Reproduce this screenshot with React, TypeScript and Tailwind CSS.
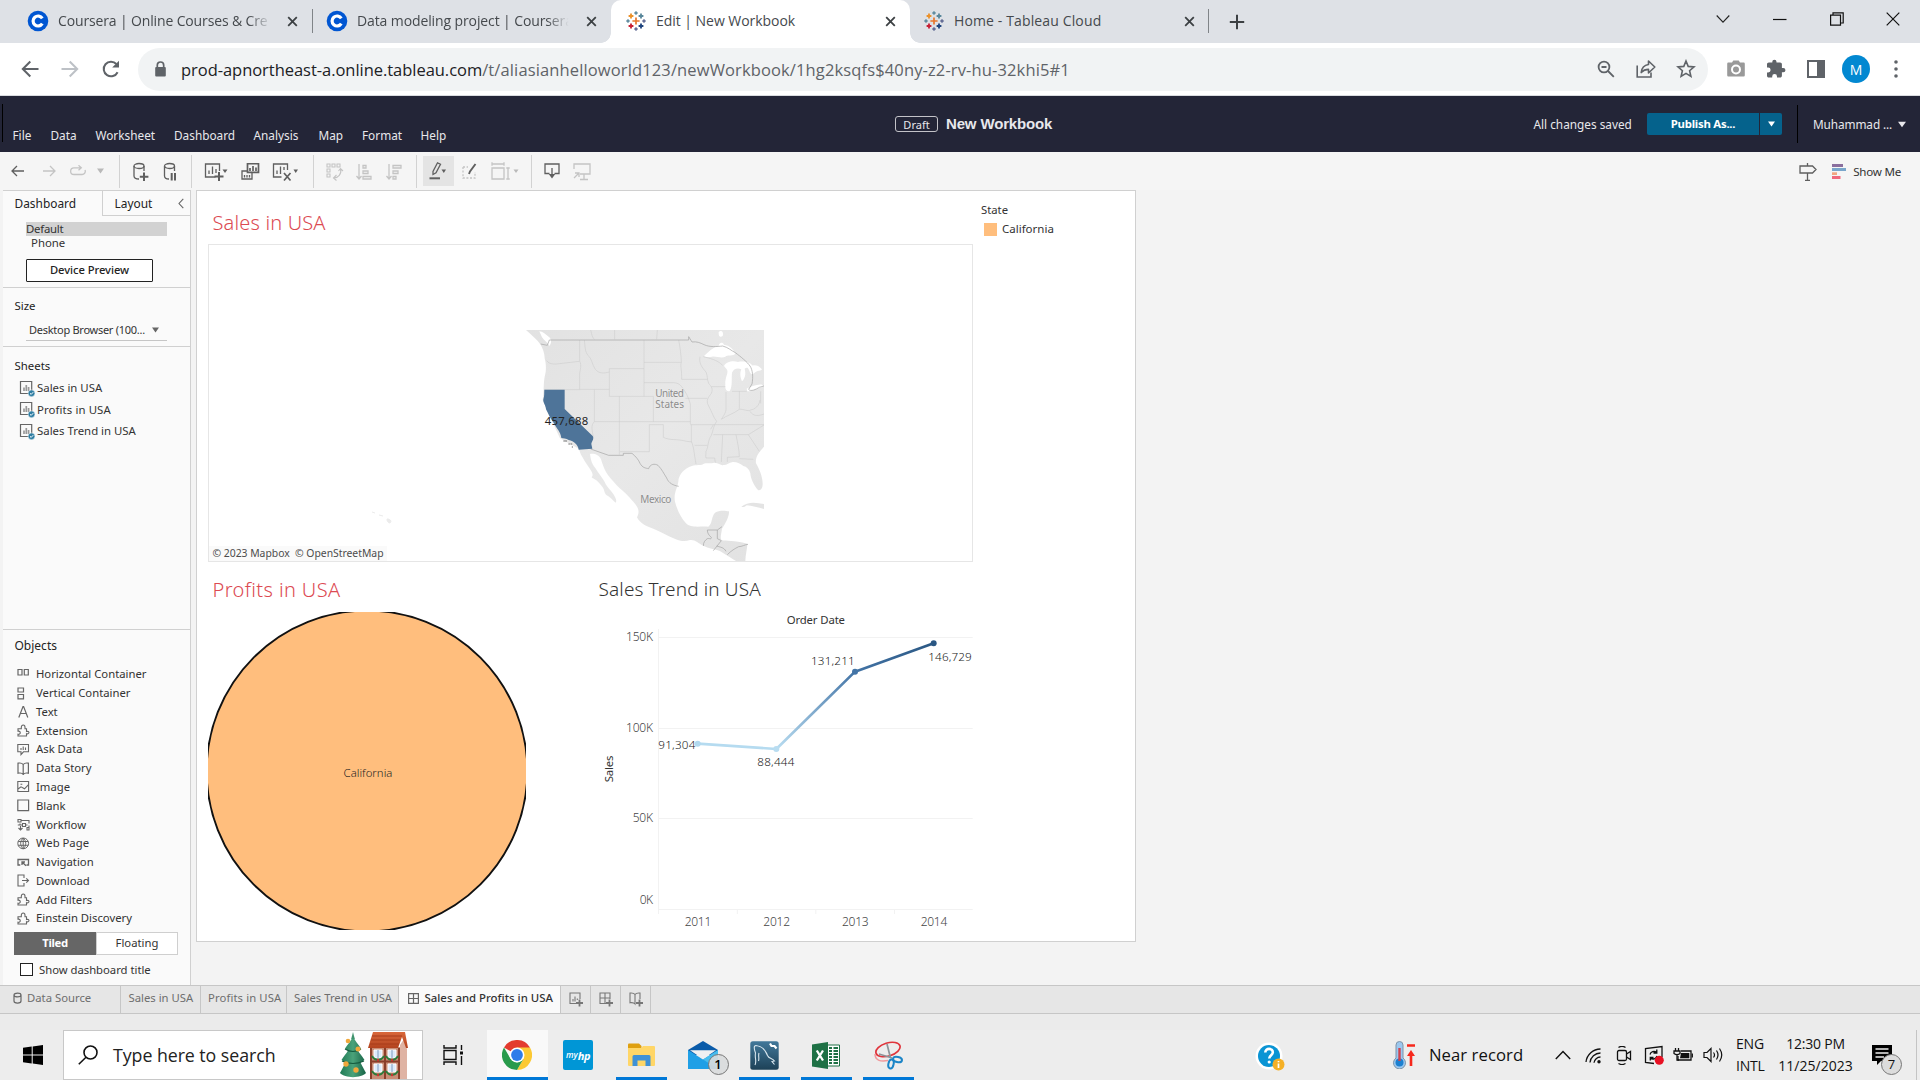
import type { ReactNode } from "react";

/* ---------- shared pieces ---------- */

function Icon({ w = 24, h = 24, sw = 1.3, color = "#666666", children }: { w?: number; h?: number; sw?: number; color?: string; children: ReactNode }) {
  return (
    <svg width={w} height={h} viewBox={`0 0 ${w} ${h}`} fill="none" stroke={color} strokeWidth={sw} className="block shrink-0">
      {children}
    </svg>
  );
}

function Cell({ className, children }: { className: string; children?: ReactNode }) {
  return <div className={`flex shrink-0 items-center justify-center ${className}`}>{children}</div>;
}

/* ---------- browser chrome ---------- */

function CourseraLogo() {
  return (
    <Icon w={22} h={22} sw={3.2} color="#fff">
      <circle cx="11" cy="11" r="10.3" fill="#0056d2" stroke="none" />
      <path d="M15.3 8.3 A5 5 0 1 0 15.3 13.7" />
    </Icon>
  );
}

function TableauLogo() {
  const plus = (x: number, y: number, r: number) => `M${x - r} ${y}H${x + r}M${x} ${y - r}V${y + r}`;
  return (
    <Icon w={20} h={20} sw={1.4} color="#e8762c">
      <path d={plus(10, 10, 3.6)} strokeWidth="1.7" />
      <path d={plus(5, 5, 2.4)} stroke="#eb9129" strokeWidth="1.8" />
      <path d={plus(15, 5, 2.4)} stroke="#59879b" strokeWidth="1.8" />
      <path d={plus(5, 15, 2.4)} stroke="#c72035" strokeWidth="1.8" />
      <path d={plus(15, 15, 2.4)} stroke="#1f447e" strokeWidth="1.8" />
      <path d={plus(10, 2, 1.7)} stroke="#59879b" />
      <path d={plus(10, 18, 1.7)} stroke="#5b6591" />
      <path d={plus(2, 10, 1.7)} stroke="#59879b" />
      <path d={plus(18, 10, 1.7)} stroke="#5b6591" />
    </Icon>
  );
}

function CloseX() {
  return (
    <Icon w={11} h={11} sw={1.8} color="#3c4043">
      <path d="M1.2 1.2 9.8 9.8M9.8 1.2 1.2 9.8" />
    </Icon>
  );
}

function TabStrip() {
  const text = "overflow-hidden whitespace-nowrap text-[14px] leading-5 text-[#45494d]";
  return (
    <div className="flex h-[43px] items-stretch bg-[#dee1e6]" style={{ fontFamily: '"Open Sans", sans-serif' }}>
      <div className="flex w-[313px] items-center pb-px pl-[27px]">
        <CourseraLogo />
        <span className={`${text} ml-[9px] w-[216px] tracking-[-0.14px] [mask-image:linear-gradient(to_right,black_88%,transparent_99%)]`}>Coursera | Online Courses &amp; Cre</span>
        <span className="ml-[13px]"><CloseX /></span>
        <span className="ml-auto h-6 w-px bg-[#808488]" />
      </div>
      <div className="flex w-[298px] items-center pb-px pl-[13px]">
        <CourseraLogo />
        <span className={`${text} ml-[9px] w-[216px] tracking-[-0.11px] [mask-image:linear-gradient(to_right,black_88%,transparent_98%)]`}>Data modeling project | Coursera</span>
        <span className="ml-[13px]"><CloseX /></span>
      </div>
      <div className="relative flex w-[299px] items-center rounded-t-[10px] bg-white pb-px pl-[15px] before:absolute before:-left-2.5 before:bottom-0 before:size-2.5 before:bg-[radial-gradient(circle_at_0_0,transparent_9.5px,white_10px)] after:absolute after:-right-2.5 after:bottom-0 after:size-2.5 after:bg-[radial-gradient(circle_at_100%_0,transparent_9.5px,white_10px)]">
        <TableauLogo />
        <span className={`${text} ml-[10px] w-[220px] tracking-[-0.04px]`}>Edit | New Workbook</span>
        <span className="ml-[9px]"><CloseX /></span>
      </div>
      <div className="flex w-[299px] items-center pb-px pl-[14px]">
        <TableauLogo />
        <span className={`${text} ml-[10px] w-[220px] tracking-[0.13px]`}>Home - Tableau Cloud</span>
        <span className="ml-[10px]"><CloseX /></span>
        <span className="ml-auto h-6 w-px bg-[#808488]" />
      </div>
      <Cell className="w-[55px]">
        <Icon w={16} h={16} sw={2} color="#3c4043"><path d="M8 .8V15.2M.8 8H15.2" /></Icon>
      </Cell>
      <div className="ml-auto flex pb-[6px]">
        <Cell className="w-[57px]"><Icon w={14} h={14} sw={1.1} color="#222"><path d="M.7 3.5 7 10.2 13.3 3.5" /></Icon></Cell>
        <Cell className="w-[57px]"><Icon w={14} h={14} sw={1.2} color="#111"><path d="M0 7.5H13.5" /></Icon></Cell>
        <Cell className="w-[57px]"><Icon w={14} h={14} sw={1.2} color="#111"><path d="M.6 3.1H10.5V13.2H.6ZM3 3V.8H13.2V11H10.6" /></Icon></Cell>
        <Cell className="w-[55px] pl-px"><Icon w={14} h={14} sw={1.2} color="#111"><path d="M.7 .7 13.3 13.3M13.3 .7 .7 13.3" /></Icon></Cell>
      </div>
    </div>
  );
}

function AddressBar() {
  return (
    <div className="flex h-[53px] items-center border-b border-[#dadce0] bg-white" style={{ fontFamily: '"Open Sans", sans-serif' }}>
      <Cell className="ml-[10px] w-10"><Icon w={18} h={18} sw={2} color="#5f6368"><path d="M17.5 9H2M9.3 1.5 1.8 9 9.3 16.5" /></Icon></Cell>
      <Cell className="w-10"><Icon w={18} h={18} sw={2} color="#bdc1c6"><path d="M.5 9H16M8.7 1.5 16.2 9 8.7 16.5" /></Icon></Cell>
      <Cell className="w-10 pl-px">
        <Icon w={20} h={20} sw={2} color="#5f6368"><path d="M16.6 13.2A7.3 7.3 0 1 1 15.4 5" /><path d="M18 1.8V8.6H11.2Z" fill="#5f6368" stroke="none" /></Icon>
      </Cell>
      <div className="ml-2 flex h-[43px] w-[1570px] items-center rounded-full bg-[#f1f3f4] pl-[16px]">
        <Icon w={13} h={17} sw={1.7} color="#5f6368"><path d="M3.3 7V4.2A3.2 3.2 0 0 1 9.7 4.2V7" /><rect x="1.2" y="6" width="10.6" height="9.500" rx="1" fill="#5f6368" stroke="none" /></Icon>
        <span className="ml-[14px] whitespace-nowrap pt-[2px] text-[16.5px] text-[#202124] tracking-[-0.04px]">
          prod-apnortheast-a.online.tableau.com<span className="tracking-[0.13px] text-[#5f6368]">/t/aliasianhelloworld123/newWorkbook/1hg2ksqfs$40ny-z2-rv-hu-32khi5#1</span>
        </span>
        <div className="ml-auto flex pr-[2px]">
          <Cell className="w-10"><Icon w={18} h={18} sw={1.8} color="#5f6368"><circle cx="7" cy="7" r="5.4" /><path d="M11 11 16.8 16.8M4.5 7H9.5" /></Icon></Cell>
          <Cell className="w-10"><Icon w={20} h={20} sw={1.6} color="#5f6368"><path d="M1.2 6.5V18H15V13.5" /><path d="M12.5 2V5.5C7.5 6.2 5.6 9.6 5.2 13.6C7.2 11.3 9.3 10.4 12.5 10.4V14L18.8 8Z" strokeLinejoin="round" /></Icon></Cell>
          <Cell className="w-10"><Icon w={20} h={20} sw={1.6} color="#5f6368"><path d="M10 2 12.2 7.4 18 7.9 13.6 11.7 14.9 17.4 10 14.4 5.1 17.4 6.4 11.7 2 7.9 7.8 7.4Z" /></Icon></Cell>
        </div>
      </div>
      <Cell className="ml-[8px] w-10">
        <Icon w={20} h={20}><path d="M6 3.5 7.3 1.6H12.7L14 3.5H17.5A1.2 1.2 0 0 1 18.8 4.7V16.3A1.2 1.2 0 0 1 17.5 17.5H2.5A1.2 1.2 0 0 1 1.2 16.3V4.7A1.2 1.2 0 0 1 2.5 3.5Z" fill="#999" stroke="none" /><circle cx="10" cy="10.5" r="4" fill="none" stroke="#fff" strokeWidth="2" /></Icon>
      </Cell>
      <Cell className="w-10">
        <Icon w={20} h={20}><path d="M17.3 9H15.9V5.3C15.9 4.3 15.1 3.5 14.1 3.5H10.5V2.8A2.1 2.1 0 0 0 6.3 2.8V3.5H2.8C1.8 3.5 1 4.3 1 5.3V8.6H2.2A2.4 2.4 0 0 1 2.2 13.4H1V16.8C1 17.8 1.8 18.6 2.8 18.6H6.2V17.4A2.4 2.4 0 0 1 11 17.4V18.6H14.1C15.1 18.6 15.9 17.8 15.9 16.8V13.3H17.3A2.15 2.15 0 0 0 17.3 9Z" fill="#5f6368" stroke="none" /></Icon>
      </Cell>
      <Cell className="w-10"><Icon w={18} h={18} sw={2} color="#5f6368"><path d="M1 1H17V17H1Z" /><path d="M11 1H17V17H11Z" fill="#5f6368" /></Icon></Cell>
      <Cell className="w-10"><span className="flex size-7 items-center justify-center rounded-full bg-[#0288d1] text-[14px] text-white">M</span></Cell>
      <Cell className="w-10"><Icon w={4} h={18}><path d="M2 2h0M2 9h0M2 16h0" stroke="#5f6368" strokeWidth="3.6" strokeLinecap="round" /></Icon></Cell>
    </div>
  );
}

/* ---------- Tableau header and toolbar ---------- */

function Caret({ color = "#8a8a8a", w = 7 }: { color?: string; w?: number }) {
  return <svg width={w} height={w - 1} viewBox="0 0 7 6" className="block shrink-0"><path d="M0 .5H7L3.5 5.5Z" fill={color} /></svg>;
}

function AppHeader() {
  return (
    <header className="flex h-14 bg-[#232537] text-[11.8px] leading-4 text-[#e8e8ec]">
      <span className="ml-[2px] mt-2 h-[38px] w-px bg-black" />
      <nav className="mt-[31px] flex w-[892px] whitespace-nowrap pl-[9.5px]">
        <span className="w-[38px]">File</span>
        <span className="w-[45px]">Data</span>
        <span className="w-[78.5px]">Worksheet</span>
        <span className="w-[79.5px]">Dashboard</span>
        <span className="w-[65px]">Analysis</span>
        <span className="w-[43.5px]">Map</span>
        <span className="w-[58.5px]">Format</span>
        <span>Help</span>
      </nav>
      <div className="flex h-14 w-[638.5px] items-center whitespace-nowrap">
        <span className="flex h-4 w-[43px] items-center justify-center rounded-[3px] border border-[#c3c3c8] text-[11px] leading-none">Draft</span>
        <span className="ml-2 text-[15px] font-bold tracking-[-0.15px]" style={{ fontFamily: '"Liberation Sans", sans-serif' }}>New Workbook</span>
      </div>
      <div className="flex h-14 items-center whitespace-nowrap">
        <span className="w-[113.5px]">All changes saved</span>
        <span className="flex h-[22px] w-[112px] items-center justify-center rounded-l-[2px] bg-[#05628c] text-[11.4px] font-bold tracking-[-0.25px] text-white">Publish As...</span>
        <span className="ml-px flex h-[22px] w-[22px] items-center justify-center rounded-r-[2px] bg-[#05628c]"><Caret color="#fff" /></span>
        <span className="ml-[15px] h-[38px] w-px bg-black" />
        <span className="ml-[15px] w-[85px] tracking-[-0.1px]">Muhammad ...</span>
        <Caret color="#e8e8ec" w={8} />
      </div>
    </header>
  );
}

const G = "#5f5f5f";
const L = "#c4c4c4";

function Divider({ className }: { className: string }) {
  return <span className={`h-[33px] w-px shrink-0 self-center bg-[#d2d2d2] ${className}`} />;
}

function Toolbar() {
  return (
    <div className="flex h-[38px] items-stretch bg-[#f5f5f5]">
      <Cell className="ml-[2px] w-[31px]"><Icon w={14} h={12} color={G}><path d="M13 6H1.2M6 1 1 6 6 11" /></Icon></Cell>
      <Cell className="w-[31px]"><Icon w={14} h={12} color={L}><path d="M1 6H12.8M8 1 13 6 8 11" /></Icon></Cell>
      <Cell className="w-[28px]"><Icon w={18} h={12} color={L}><path d="M12 2.800H5A3 3 0 0 0 5 9.500H13A3.200 3.200 0 0 0 16 5M9.500 .3 12.300 2.800 9.500 5.300" /></Icon></Cell>
      <Cell className="w-[17px]"><Caret color="#b9b9b9" /></Cell>
      <Divider className="ml-[10px]" />
      <Cell className="ml-[5px] w-[30px] pt-[2px] pl-px"><Icon w={16} h={20} color={G}><ellipse cx="6" cy="4" rx="5" ry="2.5" /><path d="M1 4V14C1 16 3 17 6 17M11 4V9" /><path d="M11 10.5V19M6.8 14.7H15.4" strokeWidth="2" /></Icon></Cell>
      <Cell className="w-[29px] pt-[2px]"><Icon w={14} h={20} color={G}><ellipse cx="6.5" cy="4" rx="5" ry="2.5" /><path d="M1.5 4V14C1.5 16 3 17 6 17M11.5 4V9" /><path d="M8.7 11V18.5M12 11V18.5" strokeWidth="2" /></Icon></Cell>
      <Divider className="ml-[7px]" />
      <Cell className="ml-[7px] w-[34px] pt-[2px]">
        <Icon w={24} h={20} color={G}><path d="M11.5 15H1.5V2H15.5V9M5 12V8.5M8.5 12V4.5M12 11V7" /><path d="M15 10V19M10.5 14.5H19.5" strokeWidth="2" /><path d="M18.500 7.5H23.500L21 11Z" fill={G} stroke="none" /></Icon>
      </Cell>
      <Cell className="ml-[2px] w-[31px] pt-px">
        <Icon w={20} h={18} color={G}><path d="M6.5 .7H17.5V9.3H6.5ZM9 8V5M12 8V3M15 8V4.5" strokeWidth="1.7" /><path d="M11 10V16H1V8H6M3.5 14.5V12M6 14.5V12M8.5 14.5V12" /></Icon>
      </Cell>
      <Cell className="ml-[1px] w-[36px] pt-[2px]">
        <Icon w={26} h={20} color={G}><path d="M9.5 15H1.5V2H15.5V8M5 12V8.5M8.5 12V4.5M12 8V5" /><path d="M12 11 18.5 18.5M18.5 11 12 18.5" strokeWidth="1.7" /><path d="M21.500 7.5H26L23.700 11Z" fill={G} stroke="none" /></Icon>
      </Cell>
      <Divider className="ml-[10px]" />
      <Cell className="ml-[6px] w-[29px] pt-px">
        <Icon w={18} h={18} color={L}><path d="M1 1H4V4H1ZM6 1H9V4H6ZM11 1H14V4H11ZM1 6H4V9H1ZM1 11H4V14H1ZM14.5 6C16 11 12 15 8 15M10.5 12 7.5 15 10.5 17.5M12.5 8 14.5 5.5 17 8" strokeWidth="1.1" /></Icon>
      </Cell>
      <Cell className="w-[29px] pt-px"><Icon w={16} h={18} color={L}><path d="M3 1V16M.5 13 3 16 5.5 13M7 2.5H10V5H7ZM7 8H12V10.5H7ZM7 13.5H15V16H7Z" /></Icon></Cell>
      <Cell className="ml-[1px] w-[29px] pt-px"><Icon w={16} h={18} color={L}><path d="M3 1V16M.5 13 3 16 5.5 13M7 2.5H15V5H7ZM7 8H12V10.5H7ZM7 13.5H10V16H7Z" /></Icon></Cell>
      <Divider className="ml-[8px]" />
      <Cell className="ml-[6px] my-[4px] w-[31px] bg-[#e4e4e4] pr-[3px]">
        <Icon w={20} h={20} color={G}><path d="M6 13.5V10.5L10.500 1.8 13.5 3.2 9 11.8Z" /><path d="M2.500 17.3H13" strokeWidth="2" /><path d="M14.500 8.5H19L16.8 12Z" fill={G} stroke="none" /></Icon>
      </Cell>
      <Cell className="ml-[1px] w-[30px]">
        <Icon w={18} h={18} color={L}><path d="M2 5V16H14V10M2 5H7" strokeDasharray="2 1.6" /><path d="M14.5 2 9 9.5 8 12" stroke={G} strokeWidth="1.9" /></Icon>
      </Cell>
      <Cell className="ml-[2px] w-[36px]">
        <Icon w={28} h={18} color={L}><path d="M1 2H13M1 .3V3.7M13 .3V3.7M1 6H13V17H1ZM17 6V17M15.3 6H18.7M15.3 17H18.7" /><path d="M22.5 7.5H27.5L25 11Z" fill="#b9b9b9" stroke="none" /></Icon>
      </Cell>
      <Divider className="ml-[8px]" />
      <Cell className="ml-[5px] w-[30px]"><Icon w={16} h={18} color={G}><path d="M5.5 11.500H1V2H15V11.500H10.5M8 6V14" /><path d="M4.7 12H11.3L8 16.5Z" fill={G} stroke="none" /></Icon></Cell>
      <Cell className="w-[30px] pt-px"><Icon w={20} h={18} color={L}><path d="M2 6V1H18V11H8M12 11V16.5M8 16.5H16M2 15 7 10M3 10H7V14" /></Icon></Cell>
      <div className="ml-auto flex items-center pr-[19px] pt-px">
        <Icon w={18} h={18} color={G}><path d="M8.5 0V3M8.5 10V17.5M6 17.3H11M1 3H13.5L17 6.5 13.5 10H1Z" /></Icon>
        <svg width="14" height="17" viewBox="0 0 14 17" className="ml-[15px]"><path d="M0 1H11V4H0Z" fill="#8a6f9e" /><path d="M0 5H14V8H0Z" fill="#79a6cb" /><path d="M0 9.3H5V12H0Z" fill="#f2a680" /><path d="M0 13H8.5V16H0Z" fill="#f0697c" /></svg>
        <span className="ml-[7px] whitespace-nowrap text-[11.6px] tracking-[-0.25px] text-[#333]">Show Me</span>
      </div>
    </div>
  );
}

/* ---------- sidebar ---------- */

function SheetItem({ label, tight }: { label: string; tight?: string }) {
  return (
    <div className="flex h-[21.6px] items-center pl-[16px]">
      <Icon w={17} h={17}>
        <path d="M1.5 1.5H12.7V13.5H1.5Z" strokeWidth="1.2" />
        <path d="M5 11V7.5M7.3 11V5M9.6 11V7" stroke="#999" strokeWidth="1.7" />
        <circle cx="12.500" cy="13.3" r="3.4" fill="#2f7ea3" stroke="#fafafa" strokeWidth=".5" />
        <path d="M11 13.3 12.2 14.4 14.2 12.2" stroke="#fff" strokeWidth="1" />
      </Icon>
      <span className={`ml-[1px] whitespace-nowrap text-[11.4px] leading-4 ${tight ?? ""}`}>{label}</span>
    </div>
  );
}

const puzzle = <path d="M1 4.800H4.300V3.300C4.300 .2 8 .2 8 3.300V4.800H9.500V7.500C12.800 6.600 12.800 10.600 9.500 9.700V12H1V10.200C4 10.700 4 6.600 1 7.200Z" strokeWidth="1.1" />;

const objects: [string, ReactNode][] = [
  ["Horizontal Container", <path d="M1 1.5H5V7H1ZM7.3 1.5H11.3V7H7.3Z" />],
  ["Vertical Container", <path d="M1 1H6.5V5H1ZM1 7.5H6.5V11.8H1Z" />],
  ["Text", <path d="M1.8 12.5 6 1.5H6.6L10.8 12.5M3.3 8.5H9.3" />],
  ["Extension", puzzle],
  ["Ask Data", <path d="M.8 1.5H11.5V8.8H6.5L4 11.5V8.8H.8ZM4 7V5M6.2 7V3.5M8.5 7V4.5" strokeWidth="1.1" />],
  ["Data Story", <path d="M6.2 2.5V12.3C5 10.8 3 10.8 1 11.2V1.2C3 .8 5 1 6.2 2.5C7.4 1 9.4 .8 11.4 1.2V11.2C9.4 10.8 7.4 10.8 6.2 12.3" />],
  ["Image", <path d="M.8 1.5H11.6V11.5H.8ZM1 9 4 6.8 7.5 8.8 11.3 4.8M3.5 4.3H5.3" strokeWidth="1.1" />],
  ["Blank", <path d="M.8 1H11.6V11.6H.8Z" />],
  ["Workflow", <path d="M1 1.500H4V4H1ZM4 2.500H12V5.500M.8 7H3V5.500M5.500 5.500H8.500V8.500H5.500ZM3 7H5.500M8.500 7H10.500M3.500 8V11.800M1.500 10 3.500 12 5.500 10M12 7.500V9.500M10 9.500H12V12H10Z" strokeWidth="1.1" />],
  ["Web Page", <path d="M6.2 1A5.4 5.4 0 1 0 6.2 11.8 5.4 5.4 0 1 0 6.2 1ZM6.2 1C2.8 4 2.8 8.8 6.2 11.8C9.6 8.8 9.6 4 6.2 1ZM1.2 4.5H11.2M1.2 8.3H11.2M6.2 1V12" strokeWidth="1" />],
  ["Navigation", <path d="M3.3 9H1V3.5H11.5V9H9.5M9 9.8 5 6M5 9V6H8" strokeWidth="1.3" />],
  ["Download", <path d="M7 4V1H1V12H7V9M5 6.5H11.5M9.3 4.3 11.5 6.5 9.3 8.7" strokeWidth="1.1" />],
  ["Add Filters", puzzle],
  ["Einstein Discovery", puzzle],
];

function Sidebar() {
  return (
    <aside className="ml-[3px] flex w-[188px] shrink-0 flex-col border-r border-t border-[#d0d0d0] bg-[#fafafa] text-[#333]">
      <div className="flex h-[25px] text-[11.9px] leading-4">
        <span className="w-[99px] pl-[11.5px] pt-[4px] text-[#222]">Dashboard</span>
        <div className="flex grow border-b border-l border-[#d0d0d0] pl-[11.5px] pt-[4px]">
          <span className="w-[63px] text-[#222]">Layout</span>
          <span className="pt-[3px]"><Icon w={6} h={11} sw={1.1}><path d="M5.3 .8 1 5.5 5.3 10.2" /></Icon></span>
        </div>
      </div>
      <div className="h-[72px] border-b border-[#d0d0d0] pl-[23px] pt-[6px] text-[11.4px] leading-[14px]">
        <div className="h-[14px] w-[141px] bg-[#d2d2d2] tracking-[-0.25px]">Default</div>
        <div className="pl-[5px]">Phone</div>
        <div className="mt-[9px] flex h-[23px] w-[127px] items-center justify-center rounded-[1px] border border-[#222] bg-white pb-px text-[11.2px] font-medium tracking-[-0.05px] text-[#222]">Device Preview</div>
      </div>
      <div className="h-[59px] border-b border-[#d0d0d0] pl-[11.5px] pt-[10px]">
        <div className="text-[11.4px] leading-4 text-[#222]">Size</div>
        <div className="ml-[11.500px] mt-[6px] flex h-[21px] w-[141px] items-center border-b border-[#c6c6c6] pl-[3px]">
          <span className="w-[123px] whitespace-nowrap text-[11px] tracking-[-0.27px]">Desktop Browser (100...</span>
          <Caret color="#666" />
        </div>
      </div>
      <div className="h-[283px] border-b border-[#d0d0d0] pt-[11px]">
        <div className="mb-[3.5px] pl-[11.5px] text-[11.4px] leading-4 text-[#222]">Sheets</div>
        <SheetItem label="Sales in USA" />
        <SheetItem label="Profits in USA" tight="tracking-[0.1px]" />
        <SheetItem label="Sales Trend in USA" />
      </div>
      <div className="flex h-[35px] pl-[11.5px] pt-[8px] text-[12px] leading-4 text-[#222]">Objects</div>
      {objects.map(([label, icon]) => (
        <div key={label} className="flex h-[18.78px] items-center pl-[14px]">
          <Icon w={13} h={13} sw={1.2}>{icon}</Icon>
          <span className="ml-[6px] whitespace-nowrap text-[11.3px] leading-4">{label}</span>
        </div>
      ))}
      <div className="ml-[11px] mt-[4px] flex h-[23px] w-[164px] text-[11.3px] leading-[22px]">
        <span className="w-[82px] bg-[#666] text-center font-bold tracking-[-0.3px] text-white">Tiled</span>
        <span className="w-[82px] border border-[#cfcfcf] bg-white text-center leading-5">Floating</span>
      </div>
      <div className="mt-[7px] flex items-center pl-[17px]">
        <span className="size-[13px] border border-[#222] bg-white" />
        <span className="ml-[6px] text-[11.3px] leading-4 tracking-[-0.02px]">Show dashboard title</span>
      </div>
    </aside>
  );
}

/* ---------- dashboard canvas ---------- */

const FONT = '"Noto Sans", sans-serif';

/** Mercator base map of North America with California filled. */
function UsaMap() {
  return (
    <svg width="290" height="260" viewBox="0 0 870 780" className="absolute left-[291px] top-[65px]" fontFamily={FONT}>
      <defs>
        <linearGradient id="land" x1="0" y1="0" x2="1" y2="1">
          <stop offset="0" stopColor="#e2e2e2" /><stop offset=".5" stopColor="#e8e8e8" /><stop offset="1" stopColor="#e2e2e2" />
        </linearGradient>
      </defs>
      <path fill="url(#land)" d="M78 60H792V410C778 425 765 440 768 460C778 478 788 500 788 522C788 535 782 543 774 540C764 530 752 508 751 490C748 478 740 470 730 468C722 462 710 455 698 456C686 458 680 466 670 465C664 470 655 456 640 459C625 462 618 456 606 464C590 466 580 464 566 472C548 482 536 496 535 515C532 535 520 550 525 575C530 595 540 620 558 640C572 655 600 648 625 650C638 640 634 618 645 608C658 600 676 602 687 604C688 620 676 640 666 656C664 672 660 682 664 690C680 694 700 690 742 701C742 715 736 735 736 753H708C695 745 680 735 668 728C650 716 625 718 608 706C596 700 585 688 570 690C552 696 540 692 524 686C500 676 480 664 460 656C440 650 420 640 411 622C418 608 416 600 412 592C406 580 396 572 388 562C376 548 362 538 350 526C338 510 325 500 318 486C312 476 308 464 303 448C298 436 285 430 270 432C272 446 274 460 286 474C296 490 304 500 312 512C318 528 332 540 340 552C345 562 352 570 347 578C338 570 330 560 318 554C312 548 314 540 308 532C300 522 292 512 284 508C282 504 272 504 276 500C282 492 272 482 268 474C258 460 250 446 243 434C240 426 238 420 236 416L180 385L150 320L128 270C132 250 130 220 134 200C140 180 138 160 134 145C134 130 128 115 122 104C112 90 95 75 78 60Z" />
      <path fill="#e4e4e4" d="M724 590C738 578 760 576 776 580L792 582V597C775 592 755 588 740 586C735 592 728 592 724 590Z" />
      <path fill="#fff" d="M118 64C128 64 138 74 148 82C156 90 154 102 148 108C144 98 132 92 126 82ZM612 138C625 126 638 112 656 108C656 98 668 94 672 104C688 106 700 118 706 130C700 142 684 132 676 140C664 146 650 138 636 140C626 142 616 142 612 138ZM672 168C676 156 700 150 714 156C732 152 752 158 758 168C752 176 742 170 734 176C738 192 736 204 726 214C722 205 718 190 724 178C714 172 700 176 696 188C694 206 698 226 690 242C680 248 674 236 676 222C674 204 688 186 680 178ZM656 66C664 58 672 66 668 78C662 82 655 82 656 66ZM740 236C750 232 770 222 786 224L792 230C776 232 760 244 742 244Z" />
      <path fill="#fff" d="M742 170C756 166 772 160 786 178C784 184 772 180 762 190C756 196 750 190 748 182Z" />
      <g fill="none" stroke="#c9c9c9" strokeWidth="1.500">
        <path d="M140 152C150 166 170 162 186 160C204 158 222 156 238 154M239 90V154C246 166 240 180 239 190V238H328M133 239H239M253 90C256 110 254 124 264 136C276 146 276 164 286 178C298 192 312 190 328 186V176H432M328 186V259H460M432 90V259M432 157H544M432 218H520C530 218 540 222 545 230C556 244 566 262 571 282V342M536 90C540 110 544 140 544 157C540 170 546 180 545 208M545 208H622M283 239V335M283 335H571M358 259V434M460 259V335M283 335C272 346 276 360 280 380M448 344H490V382C510 392 530 386 560 394L576 396M448 344V425H360M571 344H640L632 358M574 344V394C582 412 582 430 588 462M556 265H622M584 406H622M600 140C596 160 606 172 618 186C624 200 620 206 626 220C634 230 640 236 634 250C626 262 616 270 626 288C636 306 640 322 650 334C640 346 640 362 634 376C622 394 626 410 618 424C618 434 616 440 618 444H644L646 458M610 140C630 146 650 148 668 166M634 230H676M678 246V300C674 316 668 320 664 328M718 244V296M664 328C680 316 700 312 718 298C730 296 744 306 752 300C764 298 778 288 780 270M640 344H792M640 374H745L792 345M668 374L664 456M708 374C712 396 718 420 718 440L682 442V456M718 446L760 448M745 374C756 390 766 406 778 424M696 244H740M782 244V280M750 304C760 320 776 318 792 312M272 60C276 74 276 84 284 88M344 60V88M472 60L470 88" />
      </g>
      <g fill="none" stroke="#a3a3a3" strokeWidth="2">
        <path d="M122 102L142 106L148 90H566V80L576 96C590 94 600 98 612 104C630 112 650 110 668 108C684 112 694 122 706 128C722 140 742 156 750 168C758 180 760 200 756 222L746 238C752 246 768 238 778 232L792 228" />
        <path d="M272 417L326 436H370V430H396C408 440 416 450 420 460C428 474 436 474 446 476C450 462 464 460 474 466C486 478 492 492 500 504C506 520 520 526 536 529" />
        <path d="M610 708C610 696 616 690 622 686C628 684 634 690 634 682C626 676 622 668 622 660H652L666 650M652 660V686L664 692L640 722M650 708C662 712 672 712 678 724M682 734C694 722 704 716 716 710C726 710 734 704 744 703" />
      </g>
      <path d="M133 239H194V297L278 378C284 386 274 396 274 402L277 416L236 419C234 404 222 394 206 390C198 384 190 386 184 384C182 366 170 356 162 340C150 325 146 312 138 298C138 288 128 276 130 268C134 256 132 248 133 239Z" fill="#4e7499" />
      <path d="M190 393H201M205 402H212M215 400V404M217 409V413" stroke="#777" strokeWidth="3" />
      <g fontSize="30" fill="#8c8c8c" stroke="#ececec" strokeWidth="3" paintOrder="stroke">
        <text x="466" y="261" textLength="86">United</text>
        <text x="466" y="295" textLength="86">States</text>
        <text x="421" y="580" textLength="93">Mexico</text>
      </g>
      <text x="134" y="345" fontSize="34" textLength="131" fill="#222">457,688</text>
    </svg>
  );
}

const years: [string, number][] = [["2011", 413], ["2012", 649], ["2013", 885], ["2014", 1121]];

function TrendChart() {
  return (
    <svg width="440" height="330" viewBox="0 120 1320 990" className="block" fontFamily={FONT}>
      <defs>
        <linearGradient id="g1" gradientUnits="userSpaceOnUse" x1="649" y1="537" x2="885" y2="305"><stop offset="0" stopColor="#b9ddf1" /><stop offset="1" stopColor="#4374a6" /></linearGradient>
        <linearGradient id="g2" gradientUnits="userSpaceOnUse" x1="885" y1="305" x2="1121" y2="220"><stop offset="0" stopColor="#4374a6" /><stop offset="1" stopColor="#2a5783" /></linearGradient>
      </defs>
      <g stroke="#f2f2f2" strokeWidth="3">
        <path d="M295.5 177V1032M295 202.5H1238M295 475.5H1238M295 745.5H1238M295 1018.5H1238M532 1018V1032M767.5 1018V1032M1003.5 1018V1032" />
      </g>
      <g fontSize="36" fill="#444" fontWeight="300">
        <text x="198" y="213" textLength="81">150K</text>
        <text x="198" y="486" textLength="81">100K</text>
        <text x="218" y="756" textLength="61">50K</text>
        <text x="239" y="1002" textLength="40">0K</text>
        {years.map(([y, x]) => <text key={y} x={x - 39} y="1069" textLength="80">{y}</text>)}
      </g>
      <text x="680" y="162" fontSize="34" textLength="175" fill="#333">Order Date</text>
      <text transform="translate(159 637) rotate(-90)" fontSize="34" textLength="80" fill="#333">Sales</text>
      <g fill="none" strokeWidth="8" strokeLinecap="round">
        <path d="M413 521 649 537" stroke="#b5dbf0" />
        <path d="M649 537 885 305" stroke="url(#g1)" />
        <path d="M885 305 1121 220" stroke="url(#g2)" />
      </g>
      <circle cx="413" cy="521" r="9" fill="#b1d8ee" /><circle cx="649" cy="537" r="9" fill="#b9ddf1" />
      <circle cx="885" cy="305" r="9" fill="#4374a6" /><circle cx="1121" cy="220" r="9" fill="#2a5783" />
      <g fontSize="35" fill="#222" fontWeight="300">
        <text x="295" y="536" textLength="111">91,304</text>
        <text x="592" y="588" textLength="111">88,444</text>
        <text x="753" y="285" textLength="131">131,211</text>
        <text x="1105" y="273" textLength="130">146,729</text>
      </g>
    </svg>
  );
}

function Dashboard() {
  return (
    <main className="ml-[5px] h-[752px] w-[940px] shrink-0 border border-[#d0d0d0] bg-white">
      <div className="flex pl-[11px]">
        <section className="w-[765px]">
          <h2 className="flex h-[53px] items-center pl-[4.5px] pt-[10px] text-[20px] font-light leading-7 tracking-[0.16px] text-[#dc4a52]">Sales in USA</h2>
          <div className="relative h-[318px] border border-[#e6e6e6]">
            <UsaMap />
            <svg width="24" height="14" viewBox="0 0 24 14" className="absolute left-[160px] top-[266px]"><path d="M3 1 6 2M10 4 14 5M18 8C21 8 23 10 21 12 19 12 18 10 18 8Z" stroke="#ebebeb" fill="#ebebeb" /></svg>
            <span className="absolute bottom-0 left-0 whitespace-pre bg-[#fafafa] px-[3.5px] text-[10.4px] leading-[15px] tracking-[-0.02px] text-[#4c4c4c]">© 2023 Mapbox  © OpenStreetMap</span>
          </div>
        </section>
        <section className="ml-[8px] pt-[11px] text-[#333]">
          <div className="text-[11.3px] leading-4">State</div>
          <div className="mt-[3px] flex items-center">
            <span className="ml-[3px] size-[13px] bg-[#ffbe7d]" />
            <span className="ml-[5px] text-[11.5px] leading-4">California</span>
          </div>
        </section>
      </div>
      <div className="flex pl-[11px]">
        <section className="w-[352px]">
          <h2 className="flex h-[50px] items-center pl-[4.5px] pt-[6px] text-[20px] font-light leading-7 tracking-[0.39px] text-[#dc4a52]">Profits in USA</h2>
          <div className="relative flex size-[318px] items-center justify-center">
            <svg width="318" height="318" viewBox="0 0 318 318" className="absolute inset-0 overflow-hidden"><circle cx="159" cy="159" r="160.4" fill="#ffbe7d" stroke="#111" strokeWidth="1.9" /></svg>
            <span className="relative pl-[2px] pt-[4px] text-[11.3px] font-light tracking-[0.05px] text-[#222]">California</span>
          </div>
        </section>
        <section>
          <h2 className="flex h-[48px] items-center pl-[38.500px] pt-[6px] text-[19px] font-light leading-7 tracking-[0.13px] text-[#333]">Sales Trend in USA</h2>
          <TrendChart />
        </section>
      </div>
    </main>
  );
}

/* ---------- sheet tabs ---------- */

function SheetTabs() {
  const tab = "flex shrink-0 items-center border-r border-[#c6c6c6] whitespace-nowrap pb-[3px]";
  return (
    <div className="flex h-[29px] border-y border-[#c6c6c6] bg-[#e6e6e6] text-[11.3px] leading-4 text-[#6e6e6e]">
      <div className={`${tab} w-[121px] pl-[13px]`}>
        <Icon w={9} h={12} sw={1.2}><path d="M1 3C1 .5 8 .5 8 3V9C8 11.7 1 11.7 1 9ZM1 3C1 5.5 8 5.5 8 3" /></Icon>
        <span className="ml-[5px]">Data Source</span>
      </div>
      <div className={`${tab} w-[80px] pl-[7.5px]`}>Sales in USA</div>
      <div className={`${tab} w-[86px] pl-[7px] tracking-[0.1px]`}>Profits in USA</div>
      <div className={`${tab} w-[112px] pl-[7px]`}>Sales Trend in USA</div>
      <div className={`${tab} w-[162px] bg-[#fafafa] pl-[9px] text-[#333]`}>
        <Icon w={11} h={11} sw={1.2}><path d="M.6 .6H10.4V10.4H.6ZM5.5 .6V10.4M.6 5.5H10.4" /></Icon>
        <span className="ml-[5.5px] text-[11.4px] font-medium">Sales and Profits in USA</span>
      </div>
      <div className={`${tab} w-[30px] justify-center pl-px pt-0.5`}><Icon w={15} h={15} sw={1.1} color="#777"><path d="M7 11.5H1V1H11V7M4 9.5V7M6 9.5V4.5M8.3 8V6.5" /><path d="M10.5 7.5V14.5M7 11H14" strokeWidth="1.8" /></Icon></div>
      <div className={`${tab} w-[30px] justify-center pl-px pt-0.5`}><Icon w={15} h={15} sw={1.1} color="#777"><path d="M7 11.5H1V1H11V7M6 1V11.5M1 6H11" /><path d="M10.5 7.5V14.5M7 11H14" strokeWidth="1.8" /></Icon></div>
      <div className={`${tab} w-[30px] justify-center pl-px pt-0.5`}><Icon w={15} h={15} sw={1.1} color="#777"><path d="M6 2.5V12C5 10.8 3 10.5 1 10.8V1C3 .8 5 1 6 2.5C7 1 9 .8 11 1V7" /><path d="M10.5 7.5V14.5M7 11H14" strokeWidth="1.8" /></Icon></div>
    </div>
  );
}

/* ---------- Windows taskbar ---------- */

function XmasArt() {
  return (
    <svg width="72" height="48" viewBox="0 0 72 48" className="block">
      <defs>
        <linearGradient id="tree" x1="0" x2="1"><stop offset="0" stopColor="#1f7a55" /><stop offset=".5" stopColor="#4aa27a" /><stop offset="1" stopColor="#176346" /></linearGradient>
        <linearGradient id="roof" y1="0" y2="1" x2="0"><stop offset="0" stopColor="#d9673a" /><stop offset="1" stopColor="#b3431f" /></linearGradient>
      </defs>
      <path d="M14 5C16 10 19 13 22 17.500L19 19.500C21 23 23 25 25.500 29L21.500 31.500C23 35 25 38 27 42C22 47.500 6 47.500 1 42C3 38 5 35 6.500 31.500L2.500 29C5 25 7 23 9 19.500L6 17.500C9 13 12 10 14 5Z" fill="url(#tree)" />
      <path d="M6 18Q14 23 22 18M3 30Q14 35 25 30" stroke="#145a3e" strokeWidth="1.200" fill="none" />
      <path d="M14 1 15.800 8 12.200 8Z" fill="#3f936d" />
      <circle cx="9" cy="10" r="2.300" fill="#f0a83c" /><circle cx="19" cy="18" r="2.500" fill="#f0a83c" /><circle cx="7" cy="33" r="2.700" fill="#f0a83c" /><circle cx="17" cy="39" r="2.700" fill="#f0a83c" />
      <path d="M32 16H61V48H32Z" fill="#c98d76" />
      <path d="M61 14 65 8 68 18V48H61Z" fill="#dfb3a3" />
      <path d="M34 1H66L69 17H67L63 6 59 17H29Z" fill="url(#roof)" />
      <path d="M33 5H63M32 9H61M31 13H60" stroke="#a83c1b" strokeWidth="1" />
      <path d="M32 17V48M46 17V48M60 17V48M32 30.5H60" stroke="#8a3f2a" strokeWidth="2" />
      <path d="M35 19H43V27H35ZM49 19H57V27H49ZM35 33H43V41H35ZM49 33H57V41H49Z" fill="#dcebfa" stroke="#fff" />
      <path d="M39 19V27M53 19V27M39 33V41M53 33V41" stroke="#7f9cc0" strokeWidth="1" />
      <path d="M33 25C36 30 42 30 45 25M47 25C50 30 56 30 59 25M33 40C36 45 42 45 45 40M47 40C50 45 56 45 59 40" stroke="#2b7d3c" strokeWidth="2" fill="none" />
      <circle cx="39" cy="29" r="1.2" fill="#c33" /><circle cx="53" cy="29" r="1.2" fill="#c33" /><circle cx="39" cy="44" r="1.2" fill="#c33" /><circle cx="53" cy="44" r="1.2" fill="#c33" />
    </svg>
  );
}

function TaskApp({ className, running, children }: { className: string; running?: boolean; children: ReactNode }) {
  return (
    <div className={`flex h-[50px] shrink-0 flex-col items-center ${className}`}>
      <div className="flex h-[47px] items-center pr-px pt-[3px]">{children}</div>
      {running && <div className="h-[3px] w-full bg-[#0078d7]" />}
    </div>
  );
}

function Taskbar() {
  const K = "#111";
  return (
    <div className="flex h-[50px] items-stretch bg-[#ededed] text-[#111]" style={{ fontFamily: '"Open Sans", sans-serif' }}>
      <Cell className="w-[63px] pl-[2px]">
        <svg width="20" height="20" viewBox="0 0 20 20"><path d="M0 2.8 8.7 1.6V9.5H0ZM9.7 1.4 20 0V9.5H9.7ZM0 10.5H8.7V18.4L0 17.2ZM9.7 10.5H20V20L9.7 18.6Z" fill="#000" /></svg>
      </Cell>
      <div className="flex w-[360px] items-center border border-[#c8c8c8] bg-white">
        <span className="ml-[14px]"><Icon w={20} h={20} sw={1.6} color={K}><circle cx="12.5" cy="7.5" r="6.5" /><path d="M8 12.3 .8 19.3" /></Icon></span>
        <span className="ml-[15px] w-[226px] whitespace-nowrap text-[17.8px] tracking-[-0.06px] text-[#222]">Type here to search</span>
        <XmasArt />
      </div>
      <Cell className="w-[59px]">
        <Icon w={20} h={20} sw={1.4} color={K}><path d="M1 0V3H13V0M1 5.5H13V14.5H1ZM1 20V17H13V20M18.5 0V5M18.5 11V20" /><path d="M17 6.5H20V9.5H17Z" fill={K} stroke="none" /></Icon>
      </Cell>
      <TaskApp className="ml-[5px] w-[61px] bg-[#f9f9f9]" running>
        <svg width="30" height="30" viewBox="0 0 30 30">
          <path d="M15 15 2 7.5A15 15 0 0 1 28 7.5Z" fill="#e33b2e" />
          <path d="M15 7.5H28A15 15 0 0 1 15 30L21.5 18.7Z" fill="#fcc934" />
          <path d="M2 7.5 8.5 18.7 15 22.5 21.5 18.7 15 30A15 15 0 0 1 2 7.5Z" fill="#299b4c" />
          <circle cx="15" cy="15" r="7.5" fill="#fff" /><circle cx="15" cy="15" r="5.9" fill="#2f7de9" />
        </svg>
      </TaskApp>
      <TaskApp className="ml-[5px] w-[51px]">
        <div className="flex size-[30px] items-center justify-center rounded-[2px] bg-[#0096d6] leading-none text-white">
          <span className="text-[8.5px] font-semibold italic">my</span><span className="text-[11px] font-bold italic tracking-[-0.5px]">hp</span>
        </div>
      </TaskApp>
      <TaskApp className="ml-[12px] w-[51px]" running>
        <svg width="27" height="24" viewBox="0 0 27 24"><path d="M0 1.5Q0 .5 1 .5H11L13.5 3V8H0Z" fill="#dfa010" /><path d="M0 5H13L15 3H26Q27 3 27 4V22Q27 23 26 23H1Q0 23 0 22Z" fill="#ffd667" /><path d="M4.5 23V13.5Q4.5 12 6 12H21Q22.5 12 22.5 13.5V23H17.5V17.5H9.5V23Z" fill="#3f91d6" /></svg>
      </TaskApp>
      <TaskApp className="ml-[10px] w-[52px]">
        <div className="relative">
          <svg width="30" height="28" viewBox="0 0 30 28"><path d="M0 9 15 0 30 9V14H0Z" fill="#0a5ba9" /><path d="M0 9 15 18.5 30 9V28H0Z" fill="#1f9fe6" /><path d="M15 18.5 30 9V28Z" fill="#47bdee" /><path d="M2 9.3H28L15 18Z" fill="#eef0f2" /></svg>
          <span className="absolute left-[20px] top-[13px] flex size-[21px] items-center justify-center rounded-full border border-[#777] bg-[#d8dadb]/90 text-[13px] font-semibold leading-none text-black">1</span>
        </div>
      </TaskApp>
      <TaskApp className="ml-[10px] w-[51px]" running>
        <svg width="29" height="29" viewBox="0 0 29 29"><defs><linearGradient id="my" x2="0" y2="1"><stop offset="0" stopColor="#42789a" /><stop offset="1" stopColor="#1d4157" /></linearGradient></defs><rect x=".3" y=".3" width="28.4" height="28.4" rx="2.5" fill="url(#my)" /><path d="M5 24C7 20 4.500 17 5.500 12C4 8 3.500 4.500 6 4.500C11.500 5 15.500 9 17.500 14.500C19 18 22 17 24.500 20L22 20.500 24.500 23.500M8.500 20C9.500 17 8 15 9 12" stroke="#d8e6ee" strokeWidth="1.100" fill="none" /><path d="M20 2.5 21.5 5 24.5 5 26.5 7.5" stroke="#fff" strokeWidth="2.2" fill="none" /></svg>
      </TaskApp>
      <TaskApp className="ml-[11px] w-[51px]" running>
        <svg width="28" height="27" viewBox="0 0 28 27"><path d="M14 3H27.5V24H14Z" fill="#fff" stroke="#1e7145" strokeWidth="1" /><path d="M17 6H20M21.5 6H26M17 9H20M21.5 9H26M17 12H20M21.5 12H26M17 15H20M21.5 15H26M17 18H20M21.5 18H26M17 21H20M21.5 21H26" stroke="#1e7145" strokeWidth="1.8" /><path d="M0 2.5 16 0V27L0 24.5Z" fill="#1e7145" /><path d="M4.8 8.5 11 18.5M11 8.5 4.8 18.5" stroke="#fff" strokeWidth="2.3" /></svg>
      </TaskApp>
      <TaskApp className="ml-[11px] w-[51px]" running>
        <svg width="29" height="29" viewBox="0 0 29 29" fill="none"><ellipse cx="14" cy="8.5" rx="12.5" ry="6.5" transform="rotate(-17 14 8.5)" stroke="#e0353c" strokeWidth="1.7" /><path d="M1 13C1 19 6 21 14 19.5" stroke="#f0999c" strokeWidth="1.5" /><path d="M13 3 16.500 17M5 13 18 17" stroke="#8d9499" strokeWidth="1.700" /><ellipse cx="17" cy="23" rx="2.6" ry="4.5" transform="rotate(12 17 23)" stroke="#1c85c7" strokeWidth="2" /><ellipse cx="23.5" cy="18.5" rx="4.500" ry="2.6" transform="rotate(12 23.5 18.5)" stroke="#1c85c7" strokeWidth="2" /></svg>
      </TaskApp>
      <div className="ml-auto flex items-center">
        <svg width="30" height="30" viewBox="0 0 30 30" className="mr-[107px] mt-[3px]"><circle cx="14" cy="14" r="13.5" fill="#fff" /><circle cx="14" cy="14" r="11" fill="#0a94d4" /><path d="M10.3 10.5C10.3 5.5 18 5.8 17.8 10.5C17.7 13 14.2 13.5 14.2 16.5" stroke="#fff" strokeWidth="2.6" fill="none" /><circle cx="14.2" cy="20" r="1.6" fill="#fff" /><circle cx="23.5" cy="22.5" r="6" fill="#f5b026" /><path d="M23.5 19V20.3M23.5 21.5V26" stroke="#fff" strokeWidth="1.7" /></svg>
        <svg width="24" height="28" viewBox="0 0 24 28"><path d="M4 4A3.5 3.5 0 0 1 11 4V17A6 6 0 1 1 4 17Z" fill="#9cc8f0" stroke="#7d93a8" strokeWidth="1" /><circle cx="7.5" cy="21.5" r="4" fill="#1c80d0" /><path d="M7.5 20V7" stroke="#d1434d" strokeWidth="2.4" /><path d="M15 4.5H23M19 25V12" stroke="#f6281c" strokeWidth="2.6" /><path d="M15 15 19 9 23 15Z" fill="#f6281c" /></svg>
        <span className="ml-[13px] w-[94px] whitespace-nowrap text-[16.7px] tracking-[0.05px]">Near record</span>
        <Cell className="ml-[24px] w-[31px]"><Icon w={16} h={10} sw={1.4} color={K}><path d="M.8 9 8 1.5 15.2 9" /></Icon></Cell>
        <Cell className="w-[31px]"><Icon w={17} h={17} sw={1.3} color={K}><path d="M1 15A14.5 14.5 0 0 1 15.5 2M5 15.5A10.5 10.5 0 0 1 15.5 6M9 15.8A6.5 6.5 0 0 1 15.5 10" /><circle cx="14" cy="14.8" r="1.7" fill={K} stroke="none" /></Icon></Cell>
        <Cell className="w-[30px]"><Icon w={16} h={19} sw={1.3} color={K}><rect x="1.5" y="4.5" width="9" height="10" rx="1.5" /><path d="M10.5 8 14.5 5.5V13.5L10.5 11M2.5 1.5C4.5 .3 7.5 .3 9.5 1.5M2.5 17.5C4.5 18.7 7.5 18.7 9.5 17.5" /></Icon></Cell>
        <Cell className="w-[30px] pr-px"><Icon w={20} h={20} sw={1.3} color={K}><path d="M18 12V1.5L1.5 3.5V17.5L10 18.5M6 9.5A4 4 0 0 1 12.5 7.5M12.8 4.5V8H9.5M13 11A4 4 0 0 1 6.5 13M6.3 15.5V12.5H9.5" /><circle cx="15.3" cy="15.3" r="4.5" fill="#e81123" stroke="none" /></Icon></Cell>
        <Cell className="w-[30px] pr-[2px]"><Icon w={20} h={14} sw={1.3} color={K}><path d="M8 3H18V12H5V8" /><path d="M8 5H16.3V10.3H7Z" fill={K} stroke="none" /><path d="M19.3 5.5V9.5M2.5 0V3M5.5 0V3M1 3H7V5.5Q4 8 1 5.5ZM4 7V12H6" /></Icon></Cell>
        <Cell className="w-[30px] pr-[2px]"><Icon w={21} h={16} sw={1.2} color={K}><path d="M1 5.5H4L8 1.5V14.5L4 10.5H1ZM10.5 5.5Q12.5 8 10.5 10.5M13.5 3.5Q16.5 8 13.5 12.5M16.5 1.5Q21 8 16.5 14.5" /></Icon></Cell>
        <div className="ml-[7px] flex w-[29px] flex-col text-[14px] leading-[22.5px] tracking-[-0.2px]"><span>ENG</span><span>INTL</span></div>
        <div className="ml-[13px] flex w-[75px] flex-col items-center whitespace-nowrap text-[14px] leading-[22.5px]"><span className="tracking-[-0.22px]">12:30 PM</span><span>11/25/2023</span></div>
        <div className="relative ml-[18px] mr-[23px]">
          <svg width="22" height="22" viewBox="0 0 22 22"><path d="M1 1H21V17H10L6 21V17H1Z" fill="#000" /><path d="M4.5 5H17.5M4.5 9H17.5M4.5 13H13" stroke="#ededed" strokeWidth="1.3" /></svg>
          <span className="absolute left-[10px] top-[10px] flex size-[21px] items-center justify-center rounded-full border border-[#777] bg-[#dcdcdc] text-[13px] leading-none">7</span>
        </div>
        <span className="mr-[3px] h-[50px] w-px bg-[#c4c4c4]" />
      </div>
    </div>
  );
}

export default function App() {
  return (
    <div className="flex h-[1080px] w-[1920px] flex-col overflow-hidden bg-[#ebebeb]" style={{ fontFamily: FONT }}>
      <TabStrip />
      <AddressBar />
      <AppHeader />
      <Toolbar />
      <div className="flex h-[795px] bg-[#f3f3f3]">
        <Sidebar />
        <Dashboard />
      </div>
      <SheetTabs />
      <div className="h-4" />
      <Taskbar />
    </div>
  );
}
